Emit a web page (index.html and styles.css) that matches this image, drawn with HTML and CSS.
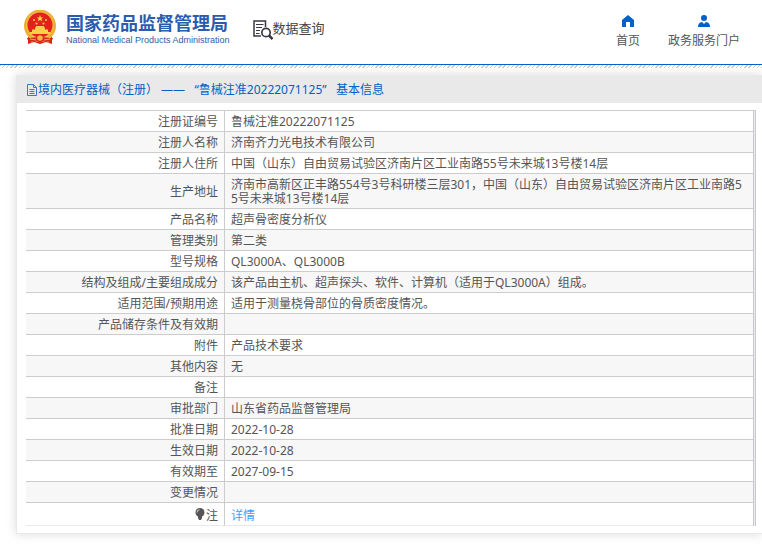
FILE: index.html
```html
<!DOCTYPE html>
<html lang="zh-CN">
<head>
	<meta charset="utf-8">
	<meta name="viewport" content="width=device-width, initial-scale=1">

	<title>国家药品监督管理局 数据查询</title>

	<link rel="stylesheet" href="styles.css">
</head>
<body>
	<!-- 页头 -->
	<header class="header">
		<a class="logo" href="#">
			<svg class="emblem" viewBox="0 0 32 34" aria-hidden="true">
				<path d="M4 25 L4 34 L10 32 L16 34 L22 32 L28 34 L28 25 Z" fill="#d9251c"/>
				<circle cx="16" cy="16" r="16" fill="#f0b93a"/>
				<circle cx="16" cy="15" r="15" fill="none" stroke="#e5a832" stroke-width="1"/>
				<circle cx="16" cy="15" r="12.5" fill="#e3231b"/>
				<path d="M16 5 L16.9 7.5 L19.5 7.5 L17.4 9.1 L18.2 11.6 L16 10 L13.8 11.6 L14.6 9.1 L12.5 7.5 L15.1 7.5 Z" fill="#f8d14a"/>
				<circle cx="10" cy="10" r="1" fill="#f8d14a"/>
				<circle cx="22" cy="10" r="1" fill="#f8d14a"/>
				<circle cx="12.5" cy="13.5" r="1" fill="#f8d14a"/>
				<circle cx="19.5" cy="13.5" r="1" fill="#f8d14a"/>
				<path d="M11 18 L12.5 16 H19.5 L21 18 V19.5 H24 V22 H26 V24 H6 V22 H8 V19.5 H11 Z" fill="#f8d14a"/>
				<path d="M3 28 Q10 28 13 27 A3.5 3.5 0 0 1 19 27 Q22 28 29 28 L27 33 L19 31 L16 33 L13 31 L5 33 Z" fill="#d9251c"/>
				<circle cx="16" cy="28" r="2.8" fill="#f0b93a"/>
				<path d="M6 29 L12 30 M20 30 L26 29 M8 31 L8 33 M24 31 L24 33" stroke="#f0b93a"/>
			</svg>
			<span class="logo-text">
				<span class="logo-cn">国家药品监督管理局</span>
				<span class="logo-en">National Medical Products Administration</span>
			</span>
		</a>

		<a class="query" href="#">
			<svg class="query-icon" viewBox="0 0 20 20" aria-hidden="true">
				<path d="M8 16 H1 V1 H12.5 V7" fill="none" stroke="#383848" stroke-width="1.5"/>
				<path d="M3 4.5 H10.5 M3 7.5 H9 M3 10.5 H7 M3 13.5 H6.5" stroke="#383848" stroke-width="1.2"/>
				<circle cx="13" cy="12.5" r="4.2" fill="#fff" stroke="#383848" stroke-width="1.7"/>
				<path d="M16 15.5 L19.5 19" stroke="#383848" stroke-width="2.5"/>
			</svg>
			<span>数据查询</span>
		</a>

		<nav class="nav">
			<a class="nav-item" href="#">
				<svg class="nav-icon" viewBox="0 0 12 12" aria-hidden="true">
					<path d="M6 0 L12 5 V12 H8 V7 H4 V12 H0 V5 Z" fill="#0061c6"/>
				</svg>
				<span>首页</span>
			</a>
			<a class="nav-item" href="#">
				<svg class="nav-icon" viewBox="0 0 12 12" aria-hidden="true">
					<circle cx="6" cy="3" r="3" fill="#0061c6"/>
					<path d="M0 12 Q0 7.5 4 7 L6 9 L8 7 Q12 7.5 12 12 Z" fill="#0061c6"/>
				</svg>
				<span>政务服务门户</span>
			</a>
		</nav>
	</header>
	<div class="header-line"></div>

	<!-- 基本信息 -->
	<main class="panel">
		<h1 class="panel-title">
			<svg class="doc-icon" viewBox="0 0 12 12" aria-hidden="true">
				<path d="M1.5 0.5 H7.5 L10.5 3.5 V11.5 H1.5 Z M7.5 0.5 V3.5 H10.5 M3.5 5.5 H8.5 M3.5 7.5 H8.5 M3.5 9.5 H8.5" fill="none" stroke="#3f76c4"/>
			</svg>
			<span>境内医疗器械（注册） ——&nbsp;&nbsp; “鲁械注准20222071125”&nbsp;&nbsp; 基本信息</span>
		</h1>

		<div class="panel-body">
			<table class="info">
				<tr><th scope="row">注册证编号</th><td>鲁械注准20222071125</td></tr>
				<tr><th scope="row">注册人名称</th><td>济南齐力光电技术有限公司</td></tr>
				<tr><th scope="row">注册人住所</th><td>中国（山东）自由贸易试验区济南片区工业南路55号未来城13号楼14层</td></tr>
				<tr><th scope="row">生产地址</th><td>济南市高新区正丰路554号3号科研楼三层301，中国（山东）自由贸易试验区济南片区工业南路55号未来城13号楼14层</td></tr>
				<tr><th scope="row">产品名称</th><td>超声骨密度分析仪</td></tr>
				<tr><th scope="row">管理类别</th><td>第二类</td></tr>
				<tr><th scope="row">型号规格</th><td>QL3000A、QL3000B</td></tr>
				<tr><th scope="row">结构及组成/主要组成成分</th><td>该产品由主机、超声探头、软件、计算机（适用于QL3000A）组成。</td></tr>
				<tr><th scope="row">适用范围/预期用途</th><td>适用于测量桡骨部位的骨质密度情况。</td></tr>
				<tr><th scope="row">产品储存条件及有效期</th><td></td></tr>
				<tr><th scope="row">附件</th><td>产品技术要求</td></tr>
				<tr><th scope="row">其他内容</th><td>无</td></tr>
				<tr><th scope="row">备注</th><td></td></tr>
				<tr><th scope="row">审批部门</th><td>山东省药品监督管理局</td></tr>
				<tr><th scope="row">批准日期</th><td>2022-10-28</td></tr>
				<tr><th scope="row">生效日期</th><td>2022-10-28</td></tr>
				<tr><th scope="row">有效期至</th><td>2027-09-15</td></tr>
				<tr><th scope="row">变更情况</th><td></td></tr>
				<tr class="note">
					<th scope="row"><svg class="bulb-icon" viewBox="0 0 10 12" aria-hidden="true"><circle cx="5" cy="4.5" r="4.5" fill="#555"/><path d="M3 8 H7 V10 L6 12 H4 L3 10 Z" fill="#555"/><path d="M2 4.5 Q2 2 4.5 1.7" fill="none" stroke="#ddd"/></svg>注</th>
					<td><a class="detail" href="#">详情</a></td>
				</tr>
			</table>
		</div>
	</main>
</body>
</html>
```

FILE: styles.css
```css
* {
	box-sizing: border-box;
}

body {
	margin: 0;
	padding-bottom: 12px;
	background-color: #fff;
	color: #555;
	font-family: "Noto Sans", "Noto Sans CJK SC", sans-serif;
	font-size: 12px;
	line-height: 14px;
}

a {
	color: inherit;
	text-decoration: none;
}

svg {
	display: block;
	flex: none;
}

/* Header */
.header {
	display: flex;
	align-items: flex-start;
	height: 65px;
	padding: 10px 22px 0 24px;
	border-bottom: 1px solid #0061c6;
}

.header-line {
	height: 3px;
	background: repeating-linear-gradient(135deg, #ccc 0 1px, #fff 1px 3px);
}

.logo {
	display: flex;
	gap: 10px;
	color: #2b5cad;
}

.emblem {
	width: 32px;
	height: 34px;
}

.logo-text {
	display: flex;
	flex-direction: column;
	padding-top: 2px;
}

.logo-cn {
	font-size: 18px;
	font-weight: bold;
	line-height: 22px;
}

.logo-en {
	font-family: "Liberation Sans", Arial, sans-serif;
	font-size: 9px;
	line-height: 12px;
}

.query {
	display: flex;
	margin: 10px 0 0 23px;
	color: #444;
	font-size: 13px;
	line-height: 16px;
}

.query-icon {
	width: 20px;
	height: 20px;
}

.nav {
	display: flex;
	gap: 28px;
	margin-left: auto;
	padding-top: 5px;
}

.nav-item {
	display: flex;
	flex-direction: column;
	align-items: center;
	gap: 7px;
}

.nav-icon {
	width: 12px;
	height: 12px;
}

/* Panel */
.panel {
	margin: 7px 0 0 16px;
	border-left: 1px solid #e9e9e9;
	border-bottom: 1px solid #e9e9e9;
	box-shadow: 0 0 10px rgba(0, 0, 0, 0.15);
}

.panel-title {
	display: flex;
	align-items: center;
	height: 28px;
	margin: 0;
	padding: 1px 0 0 9px;
	background-color: #e9e9e9;
	color: #0061c6;
	font-size: 12px;
	font-weight: normal;
}

.doc-icon {
	width: 12px;
	height: 12px;
}

.panel-body {
	padding: 7px 6px 7px 9px;
}

/* Table */
.info {
	width: 100%;
	border-collapse: separate;
	border-spacing: 0;
	border-top: 1px solid #ccc;
	border-right: 3px double #c8c8d0;
	background-color: #ececf0;
}

.info tr {
	background-color: #fff;
}

.info th, .info td {
	height: 21px;
	padding: 4px 6px 2px;
	border-bottom: 1px solid #ccc;
	word-break: break-all;
}

.info th {
	width: 199px;
	border-right: 1px solid #ccc;
	font-weight: normal;
	text-align: right;
}

.info tr:nth-child(even) {
	background-color: #f7f7f7;
}

.info .note th, .info .note td {
	height: 23px;
	border-bottom-color: #e9e9e9;
}

.info .note td {
	padding-top: 6px;
}

.bulb-icon {
	display: inline-block;
	width: 10px;
	height: 12px;
	margin-right: 1px;
}

.detail {
	color: #409eff;
}
```
